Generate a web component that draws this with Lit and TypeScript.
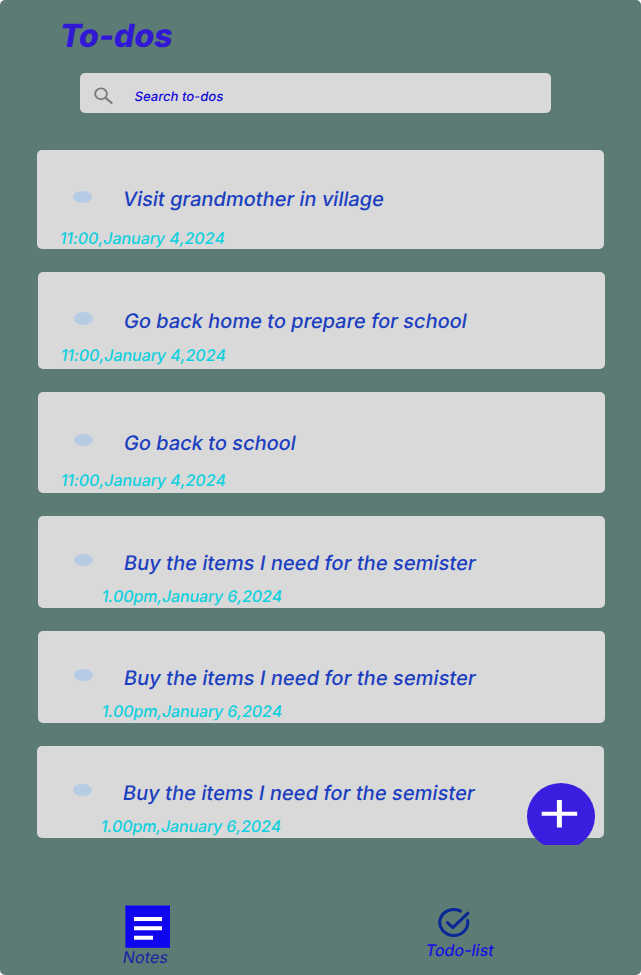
import { LitElement, html, css } from "lit";
import { customElement, property } from "lit/decorators.js";
import { styleMap } from "lit/directives/style-map.js";

interface Todo {
  title: string;
  date: string;
  size: "tall" | "medium" | "large" | "short";
  left?: boolean;
}

const TODOS: Todo[] = [
  { title: "Visit grandmother in village", date: "11:00,January 4,2024", size: "tall", left: true },
  { title: "Go back home to prepare for school", date: "11:00,January 4,2024", size: "medium" },
  { title: "Go back to school", date: "11:00,January 4,2024", size: "large" },
  { title: "Buy the items I need for the semister", date: "1.00pm,January 6,2024", size: "short" },
  { title: "Buy the items I need for the semister", date: "1.00pm,January 6,2024", size: "short" },
  { title: "Buy the items I need for the semister", date: "1.00pm,January 6,2024", size: "short", left: true },
];

// Vertical rhythm of each card size, in pixels.
const SIZES = {
  tall: { height: 99.3, gap: 22.7, title: 37.8, dot: 41, date: 17.5, indent: 21.8, track: 0, dateTrack: -0.03 },
  medium: { height: 97.7, gap: 22.3, title: 37.2, dot: 40.2, date: 12.7, indent: 21.8, track: 0, dateTrack: -0.03 },
  large: { height: 101.3, gap: 22.7, title: 39, dot: 42, date: 16.2, indent: 21.8, track: 0, dateTrack: -0.03 },
  short: { height: 92.3, gap: 22.7, title: 35.3, dot: 38, date: 12.2, indent: 63, track: 0.06, dateTrack: -0.12 },
};

@customElement("todo-card")
export class TodoCard extends LitElement {
  @property({ attribute: false }) todo!: Todo;

  static styles = css`
    :host { display: block; }
    .card {
      box-sizing: border-box;
      width: 566.7px;
      margin-left: 38px;
      border-radius: 5px;
      background: #d9d9d9;
      overflow: hidden;
    }
    .left { margin-left: 37px; }
    .row { display: flex; height: 24px; padding-left: 35.5px; }
    .dot {
      flex: none;
      width: 19.5px;
      height: 12.7px;
      border-radius: 50%;
      background: #b6cbe4;
    }
    .title {
      margin-left: 29.5px;
      font-size: 20px;
      line-height: 24px;
      font-weight: 500;
      color: #1c3fc0;
      white-space: nowrap;
      transform: skewX(-9.4deg);
      transform-origin: 0 19px;
    }
    .date {
      font-size: 16px;
      line-height: 19px;
      font-weight: 450;
      font-kerning: none;
      color: #0fd0de;
      white-space: nowrap;
      transform: skewX(-9.4deg);
      transform-origin: 0 15px;
    }
  `;

  render() {
    const t = this.todo;
    const s = SIZES[t.size];
    return html`
      <div class="card ${t.left ? "left" : ""}"
        style=${styleMap({ height: `${s.height}px`, marginBottom: `${s.gap}px`, paddingTop: `${s.title}px` })}>
        <div class="row">
          <span class="dot" style=${styleMap({ marginTop: `${s.dot - s.title}px` })}></span>
          <span class="title" style=${styleMap({ letterSpacing: `${s.track}px` })}>${t.title}</span>
        </div>
        <div class="date"
          style=${styleMap({ marginTop: `${s.date}px`, marginLeft: `${s.indent}px`, letterSpacing: `${s.dateTrack}px` })}>${t.date}</div>
      </div>
    `;
  }
}

@customElement("app-root")
export class AppRoot extends LitElement {
  static styles = css`
    :host { display: block; background: #fff; }
    .screen {
      position: relative;
      box-sizing: border-box;
      width: 641px;
      height: 975px;
      border-radius: 5px;
      background: #5c7b75;
      overflow: hidden;
      font-family: Inter, "Liberation Sans", sans-serif;
    }
    h1 {
      margin: 0;
      padding: 15.5px 0 0 58.6px;
      font-size: 32px;
      line-height: 39px;
      font-weight: 800;
      color: #3018d5;
      transform: skewX(-9.4deg);
      transform-origin: 0 46px;
    }
    .search {
      display: flex;
      box-sizing: border-box;
      width: 471px;
      height: 40.3px;
      margin: 18.2px 0 36.7px 79.6px;
      padding-left: 14px;
      border-radius: 5px;
      background: #d9d9d9;
      font-size: 13px;
      line-height: 16px;
      font-weight: 500;
      color: #1207dd;
    }
    .search svg { width: 20px; height: 18px; margin-top: 14px; }
    .search span { margin: 15.5px 0 0 20.7px; transform: skewX(-9.4deg); transform-origin: 0 13px; letter-spacing: 0.04px; }
    .add { position: absolute; left: 527px; top: 783px; width: 68px; height: 62px; }
    nav { display: flex; margin-top: 67.2px; }
    .tab { display: flex; flex-direction: column; white-space: nowrap; font-size: 16px; line-height: 19px; }
    .tab span { transform: skewX(-9.4deg); transform-origin: 0 15px; }
    .notes { width: 60px; margin-left: 121.5px; color: #1823a4; }
    .notes svg { width: 45px; height: 43px; margin-left: 3.5px; }
    .notes span { margin-top: -0.5px; letter-spacing: 0.2px; }
    .todos { margin: 3px 0 0 243px; font-weight: 500; color: #1d0fe0; }
    .todos svg { width: 33px; height: 30px; margin-left: 13px; }
    .todos span { margin-top: 2.8px; }
  `;

  render() {
    return html`
      <main class="screen">
        <h1>To-dos</h1>
        <div class="search">
          <svg viewBox="0 0 20 18" fill="none" stroke="#7c7c7c" stroke-width="1.9">
            <ellipse cx="7" cy="6.8" rx="5.9" ry="5.4" />
            <path d="M11.3 10.6 18.3 16.5" stroke-width="2.2" />
          </svg>
          <span>Search to-dos</span>
        </div>
        ${TODOS.map((t) => html`<todo-card .todo=${t}></todo-card>`)}
        <svg class="add" viewBox="0 0 68 62">
          <ellipse cx="34" cy="33.3" rx="34" ry="33.3" fill="#3a1ee0" />
          <path d="M14.7 30.7H50.2" fill="none" stroke="#fff" stroke-width="4" />
          <path d="M32.4 17V44.4" fill="none" stroke="#fff" stroke-width="5" />
        </svg>
        <nav>
          <div class="tab notes">
            <svg viewBox="0 0 45 43">
              <rect x="0.4" y="0.5" width="44.6" height="42.3" fill="#0f05ee" />
              <path d="M9 14H37M9 23.3H37M9 32.7H28" stroke="#fff" stroke-width="4" />
            </svg>
            <span>Notes</span>
          </div>
          <div class="tab todos">
            <svg viewBox="0 0 33 30" fill="none" stroke="#092796" stroke-width="3" stroke-linecap="round" stroke-linejoin="round">
              <path d="M22.5 3.1A14 13 0 1 0 29.6 12.4" />
              <path d="M9.5 14.6 14.8 19.6 30 5.2" />
            </svg>
            <span>Todo-list</span>
          </div>
        </nav>
      </main>
    `;
  }
}
